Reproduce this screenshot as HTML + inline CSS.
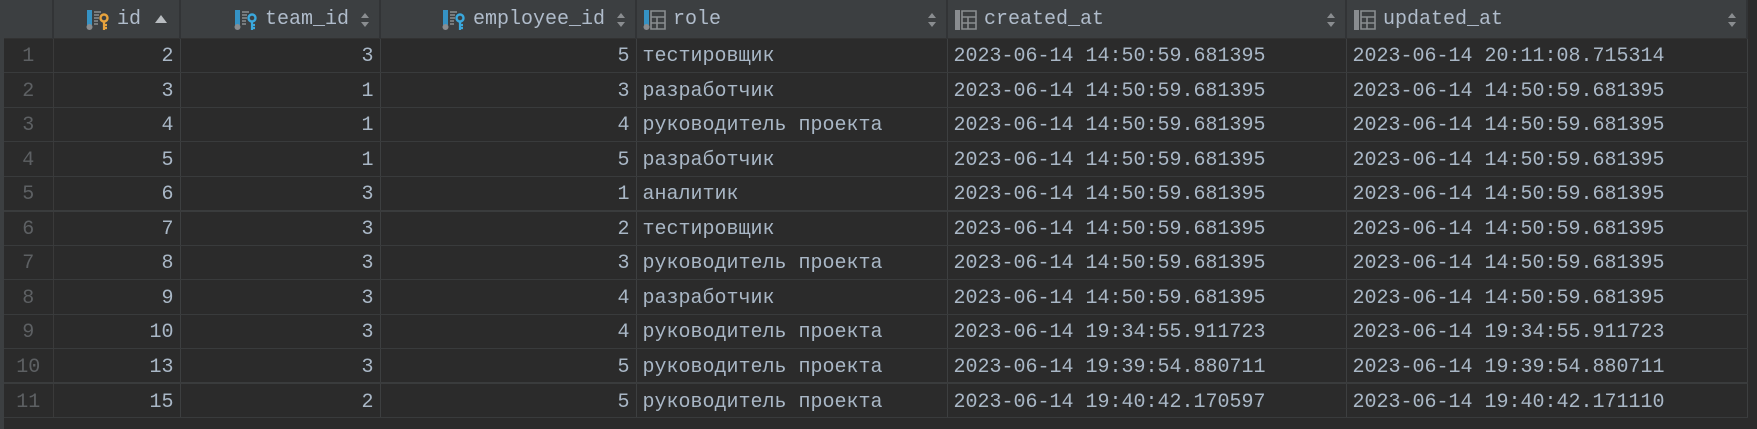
<!DOCTYPE html>
<html><head><meta charset="utf-8"><style>
html,body{margin:0;padding:0;background:#2b2b2b;width:1757px;height:429px;overflow:hidden}
body{position:relative;font-family:"Liberation Mono","DejaVu Sans Mono",monospace;font-size:20px;color:#a9b7c6}
.strip{position:absolute;left:0;top:0;width:4px;height:429px;background:#3c3f41}
table{position:absolute;left:4px;top:0;border-collapse:collapse;table-layout:fixed;width:1743px}
td,th{padding:0 6px;white-space:nowrap;overflow:hidden;border-right:1px solid #3d3f40;border-bottom:1px solid #393b3c}
th{height:36px;background:#3c3f41;font-weight:normal;color:#b0bccb;border-right:2px solid #323436;border-bottom:1px solid #323232;position:relative;padding-top:3px;box-sizing:border-box}
td{height:34.5px;background:#2b2b2b;padding-top:3px;box-sizing:border-box}
td.g{color:#5d6063;text-align:center;border-right:1px solid #3a3a3a}
td.n{text-align:right}
.ic{display:inline-block;vertical-align:middle;margin-right:7px}
.hd{display:inline-flex;align-items:center;height:33px}
.arr{position:absolute;right:10px;top:13px;width:8px}
.row-sep td{border-bottom:2px solid #3a3c3d}
</style></head><body>
<div class="strip"></div>
<table>
<colgroup><col style="width:49px"><col style="width:127px"><col style="width:200px"><col style="width:256px"><col style="width:311px"><col style="width:399px"><col style="width:401px"></colgroup>
<tr>
<th></th>
<th style="text-align:right;padding-right:38px"><span class="hd"><svg class="ic" width="24" height="22" viewBox="0 0 24 22"><rect x="1" y="1" width="5" height="15" fill="#3592c4"/><circle cx="3.5" cy="18" r="3" fill="#8a8d90"/><path d="M8 3h7M8 6h5M8 9h5M8 12h4M8 15h4" stroke="#8a8d90" stroke-width="1.5"/><circle cx="18" cy="9" r="3.5" fill="none" stroke="#e8a33d" stroke-width="2.4"/><path d="M18 12v9M18 16h3M18 19h3" stroke="#e8a33d" stroke-width="2.2"/></svg>id</span><svg style="position:absolute;right:12px;top:15px" width="12" height="8"><path d="M6 0L12 8H0z" fill="#b8bcc0"/></svg></th>
<th style="text-align:right;padding-right:30px"><span class="hd"><svg class="ic" width="24" height="22" viewBox="0 0 24 22"><rect x="1" y="1" width="5" height="15" fill="#3592c4"/><circle cx="3.5" cy="18" r="3" fill="#8a8d90"/><path d="M8 3h7M8 6h5M8 9h5M8 12h4M8 15h4" stroke="#8a8d90" stroke-width="1.5"/><circle cx="18" cy="9" r="3.5" fill="none" stroke="#3aa8dd" stroke-width="2.4"/><path d="M18 12v9M18 16h3M18 19h3" stroke="#3aa8dd" stroke-width="2.2"/></svg>team_id</span><svg class="arr" height="14" viewBox="0 0 8 14"><path d="M4 0L8 5H0zM4 14L8 9H0z" fill="#8a8d90"/></svg></th>
<th style="text-align:right;padding-right:30px"><span class="hd"><svg class="ic" width="24" height="22" viewBox="0 0 24 22"><rect x="1" y="1" width="5" height="15" fill="#3592c4"/><circle cx="3.5" cy="18" r="3" fill="#8a8d90"/><path d="M8 3h7M8 6h5M8 9h5M8 12h4M8 15h4" stroke="#8a8d90" stroke-width="1.5"/><circle cx="18" cy="9" r="3.5" fill="none" stroke="#3aa8dd" stroke-width="2.4"/><path d="M18 12v9M18 16h3M18 19h3" stroke="#3aa8dd" stroke-width="2.2"/></svg>employee_id</span><svg class="arr" height="14" viewBox="0 0 8 14"><path d="M4 0L8 5H0zM4 14L8 9H0z" fill="#8a8d90"/></svg></th>
<th style="text-align:left"><span class="hd"><svg class="ic" width="23" height="22" viewBox="0 0 23 22"><rect x="1" y="1" width="5" height="15" fill="#3592c4"/><circle cx="3.5" cy="18" r="3" fill="#8a8d90"/><path d="M8 2h14v18H8zM8 8h14M8 14h14M14 8v12" fill="none" stroke="#8a8d90" stroke-width="1.6"/></svg>role</span><svg class="arr" height="14" viewBox="0 0 8 14"><path d="M4 0L8 5H0zM4 14L8 9H0z" fill="#8a8d90"/></svg></th>
<th style="text-align:left"><span class="hd"><svg class="ic" width="23" height="22" viewBox="0 0 23 22"><rect x="1" y="1" width="5" height="20" fill="#8a8d90"/><path d="M8 2h14v18H8zM8 8h14M8 14h14M14 8v12" fill="none" stroke="#8a8d90" stroke-width="1.6"/></svg>created_at</span><svg class="arr" height="14" viewBox="0 0 8 14"><path d="M4 0L8 5H0zM4 14L8 9H0z" fill="#8a8d90"/></svg></th>
<th style="text-align:left"><span class="hd"><svg class="ic" width="23" height="22" viewBox="0 0 23 22"><rect x="1" y="1" width="5" height="20" fill="#8a8d90"/><path d="M8 2h14v18H8zM8 8h14M8 14h14M14 8v12" fill="none" stroke="#8a8d90" stroke-width="1.6"/></svg>updated_at</span><svg class="arr" height="14" viewBox="0 0 8 14"><path d="M4 0L8 5H0zM4 14L8 9H0z" fill="#8a8d90"/></svg></th>
</tr>
<tr><td class="g">1</td><td class="n">2</td><td class="n">3</td><td class="n">5</td><td>тестировщик</td><td>2023-06-14 14:50:59.681395</td><td>2023-06-14 20:11:08.715314</td></tr>
<tr><td class="g">2</td><td class="n">3</td><td class="n">1</td><td class="n">3</td><td>разработчик</td><td>2023-06-14 14:50:59.681395</td><td>2023-06-14 14:50:59.681395</td></tr>
<tr><td class="g">3</td><td class="n">4</td><td class="n">1</td><td class="n">4</td><td>руководитель проекта</td><td>2023-06-14 14:50:59.681395</td><td>2023-06-14 14:50:59.681395</td></tr>
<tr><td class="g">4</td><td class="n">5</td><td class="n">1</td><td class="n">5</td><td>разработчик</td><td>2023-06-14 14:50:59.681395</td><td>2023-06-14 14:50:59.681395</td></tr>
<tr class="row-sep"><td class="g">5</td><td class="n">6</td><td class="n">3</td><td class="n">1</td><td>аналитик</td><td>2023-06-14 14:50:59.681395</td><td>2023-06-14 14:50:59.681395</td></tr>
<tr><td class="g">6</td><td class="n">7</td><td class="n">3</td><td class="n">2</td><td>тестировщик</td><td>2023-06-14 14:50:59.681395</td><td>2023-06-14 14:50:59.681395</td></tr>
<tr><td class="g">7</td><td class="n">8</td><td class="n">3</td><td class="n">3</td><td>руководитель проекта</td><td>2023-06-14 14:50:59.681395</td><td>2023-06-14 14:50:59.681395</td></tr>
<tr><td class="g">8</td><td class="n">9</td><td class="n">3</td><td class="n">4</td><td>разработчик</td><td>2023-06-14 14:50:59.681395</td><td>2023-06-14 14:50:59.681395</td></tr>
<tr><td class="g">9</td><td class="n">10</td><td class="n">3</td><td class="n">4</td><td>руководитель проекта</td><td>2023-06-14 19:34:55.911723</td><td>2023-06-14 19:34:55.911723</td></tr>
<tr class="row-sep"><td class="g">10</td><td class="n">13</td><td class="n">3</td><td class="n">5</td><td>руководитель проекта</td><td>2023-06-14 19:39:54.880711</td><td>2023-06-14 19:39:54.880711</td></tr>
<tr><td class="g">11</td><td class="n">15</td><td class="n">2</td><td class="n">5</td><td>руководитель проекта</td><td>2023-06-14 19:40:42.170597</td><td>2023-06-14 19:40:42.171110</td></tr>
</table>
</body></html>
